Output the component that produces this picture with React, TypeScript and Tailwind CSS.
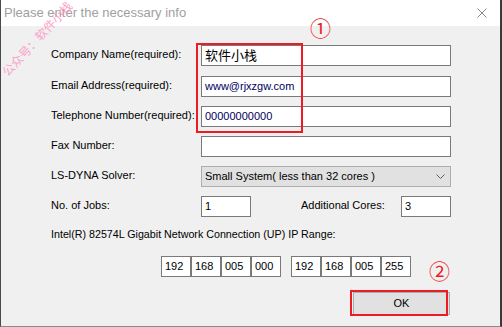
const ui = { fontFamily: '"Liberation Sans", "Noto Sans CJK SC", sans-serif' }

function Field({ value, className = '', dark = false }: { value?: string; className?: string; dark?: boolean }) {
  return (
    <div
      className={`h-[21px] bg-white border border-[#7a7a7a] flex items-center pl-[3px] text-[11px] ${
        dark ? 'text-[#000060]' : 'text-black'
      } ${className}`}
    >
      {value}
    </div>
  )
}

export default function App() {
  const ipFrom = ['192', '168', '005', '000']
  const ipTo = ['192', '168', '005', '255']

  return (
    <div
      className="relative w-[502px] h-[327px] bg-[#f0f0f0] border-l border-r-2 border-b border-l-[#4a4a4a] border-r-[#3a3a3a] border-b-[#8a8a8a] overflow-hidden flex flex-col"
      style={ui}
    >
      {/* Title bar */}
      <div className="h-[26px] bg-white flex items-center justify-between pl-[3px] pr-[13px] shrink-0">
        <span className="text-[13px] text-[#a0a0a0]">Please enter the necessary info</span>
        <svg width="10" height="10" viewBox="0 0 10 10" className="text-[#8a8a8a]">
          <path d="M0.5 0.5 L9.5 9.5 M9.5 0.5 L0.5 9.5" stroke="currentColor" strokeWidth="1" />
        </svg>
      </div>

      {/* Body */}
      <div className="flex flex-col pl-[50px] pt-[19px] text-[11px] text-black">
        <div className="flex items-center h-[21px]">
          <span className="w-[150px] -mt-[3px]">Company Name(required):</span>
          <Field value="软件小栈" className="w-[250px] text-[13px]" />
        </div>
        <div className="flex items-center h-[21px] mt-[10px]">
          <span className="w-[150px] -mt-[3px]">Email Address(required):</span>
          <Field value="www@rjxzgw.com" className="w-[250px]" dark />
        </div>
        <div className="flex items-center h-[21px] mt-[9px]">
          <span className="w-[150px] -mt-[3px]">Telephone Number(required):</span>
          <Field value="00000000000" className="w-[250px]" dark />
        </div>
        <div className="flex items-center h-[21px] mt-[9px]">
          <span className="w-[150px] -mt-[3px]">Fax Number:</span>
          <Field className="w-[250px]" />
        </div>
        <div className="flex items-center h-[21px] mt-[9px]">
          <span className="w-[150px] -mt-[3px]">LS-DYNA Solver:</span>
          <div className="w-[250px] h-[21px] bg-[#e1e1e1] border border-[#adadad] flex items-center justify-between pl-[3px] pr-[5px]">
            <span>Small System( less than 32 cores )</span>
            <svg width="9" height="5" viewBox="0 0 9 5" className="text-[#606060]">
              <path d="M0.5 0.5 L4.5 4.5 L8.5 0.5" stroke="currentColor" fill="none" strokeWidth="1" />
            </svg>
          </div>
        </div>
        <div className="flex items-center h-[21px] mt-[9px]">
          <span className="w-[150px] -mt-[3px]">No. of Jobs:</span>
          <Field value="1" className="w-[50px]" />
          <span className="ml-[50px] w-[100px] -mt-[3px]">Additional Cores:</span>
          <Field value="3" className="w-[50px]" />
        </div>
        <div className="mt-[10px] h-[14px] leading-[14px] text-[10.7px]">
          Intel(R) 82574L Gigabit Network Connection (UP) IP Range:
        </div>
        <div className="flex items-center mt-[15px] ml-[110px] gap-[10px]">
          {[ipFrom, ipTo].map((ip, g) => (
            <div key={g} className="flex">
              {ip.map((v, i) => (
                <Field key={i} value={v} className="w-[30px] pl-[2px]" />
              ))}
            </div>
          ))}
        </div>
        <div className="flex justify-end pr-[50px] mt-[15px]">
          <button className="w-[97px] h-[23px] bg-[#e1e1e1] border border-[#adadad] text-[11px] text-black">
            OK
          </button>
        </div>
      </div>

      {/* Annotations */}
      <div className="absolute left-[195px] top-[43px] w-[107px] h-[90px] border-2 border-[#ed1c24]" />
      <div className="absolute left-[349px] top-[290px] w-[98px] h-[26px] border-2 border-[#ed1c24]" />
      <span
        className="absolute left-[309px] top-[12px] text-[21px] text-[#ed1c24]"
        style={{ fontFamily: '"Noto Sans CJK SC", sans-serif' }}
      >
        ①
      </span>
      <span
        className="absolute left-[428px] top-[255px] text-[21px] text-[#ed1c24]"
        style={{ fontFamily: '"Noto Sans CJK SC", sans-serif' }}
      >
        ②
      </span>
      <span
        className="absolute left-[9px] top-[62px] w-[96px] text-[12px] leading-[17px] text-[#ff8cc0] opacity-80 origin-bottom-left -rotate-[47deg] whitespace-nowrap"
        style={{ fontFamily: '"Noto Sans CJK SC", sans-serif' }}
      >
        公众号：软件小栈
      </span>
    </div>
  )
}
